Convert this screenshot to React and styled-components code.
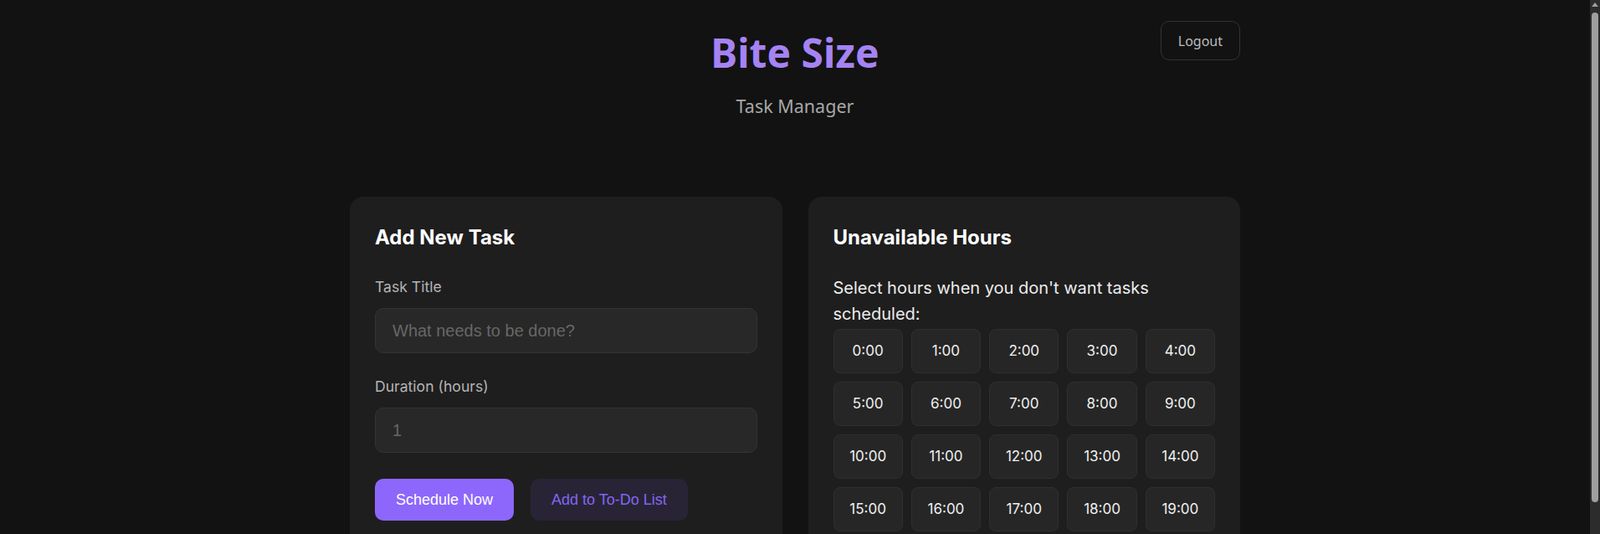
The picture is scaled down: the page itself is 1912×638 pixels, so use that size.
import React from "react"
import styled, { createGlobalStyle } from "styled-components"

const GlobalStyle = createGlobalStyle`
  html, body {
    margin: 0;
    background: #121212;
  }
  body {
    font-family: Inter, "Noto Sans", sans-serif;
    color: #e8e8e8;
    line-height: 1.6;
  }
  * {
    box-sizing: border-box;
  }
  ::-webkit-scrollbar {
    display: none;
  }
`

const Shell = styled.div`
  display: grid;
  grid-template-columns: minmax(0, 1fr) 12px;
  min-height: 100vh;
`

const Page = styled.div`
  width: 1064px;
  margin: 0 auto;
  padding: 25px 0 40px;
`

// stands in for the browser scrollbar on the right edge
const ScrollRail = styled.div`
  position: sticky;
  top: 0;
  height: 100vh;
  background: #2c2c2c;
  display: flex;
  flex-direction: column;
  align-items: center;
  padding-top: 3px;
`

const RailArrow = styled.div`
  width: 0;
  height: 0;
  border-left: 4px solid transparent;
  border-right: 4px solid transparent;
  border-bottom: 5px solid #9e9e9e;
`

const RailThumb = styled.div`
  width: 8px;
  height: 585px;
  margin-top: 7px;
  background: #9f9f9f;
  border-radius: 4px;
`

const Header = styled.header`
  display: grid;
  grid-template-columns: 1fr auto 1fr;
  align-items: start;
  font-family: "Noto Sans", "Liberation Sans", sans-serif;
`

const Brand = styled.div`
  grid-column: 2;
  text-align: center;
  padding-top: 9px;
`

const Title = styled.h1`
  margin: 0;
  font-size: 48px;
  line-height: 1.2;
  font-weight: 700;
  color: #a583f3;
`

const Subtitle = styled.p`
  margin: 18px 0 0;
  font-size: 21.5px;
  line-height: 33px;
  color: #a8a8a8;
`

const LogoutButton = styled.button`
  grid-column: 3;
  justify-self: end;
  height: 47px;
  padding: 0 20px;
  background: transparent;
  border: 1px solid #333;
  border-radius: 10px;
  color: #bdbdbd;
  font-family: "Noto Sans", "Liberation Sans", sans-serif;
  font-size: 16px;
  cursor: pointer;
`

const Columns = styled.main`
  display: grid;
  grid-template-columns: 1fr 1fr;
  gap: 31px;
  margin-top: 92px;
`

const Card = styled.section`
  background: #1e1e1e;
  border-radius: 16px;
  padding: 30px;
`

const CardTitle = styled.h2`
  margin: 0 0 26px;
  font-size: 24px;
  line-height: 38.4px;
  font-weight: 700;
  color: #fff;
`

const Field = styled.div`
  margin-bottom: 26px;
`

const Label = styled.label`
  display: block;
  margin-bottom: 11px;
  font-size: 17.6px;
  line-height: 1.6;
  color: #b5b5b5;
`

const Input = styled.input`
  display: block;
  width: 100%;
  height: 54px;
  padding: 0 20px;
  background: #282828;
  border: 1px solid #333;
  border-radius: 10px;
  color: #e8e8e8;
  font-family: "Liberation Sans", Arial, sans-serif;
  font-size: 20px;
  outline: none;

  &::placeholder {
    color: #676767;
  }
`

const ButtonRow = styled.div`
  display: flex;
  gap: 20px;
  margin-top: 31px;
`

const ActionButton = styled.button`
  height: 50px;
  padding: 0 25px;
  border: none;
  border-radius: 10px;
  font-family: "Liberation Sans", Arial, sans-serif;
  font-size: 18px;
  cursor: pointer;
  background: ${(p) => (p.$primary ? "#8d67fb" : "#282436")};
  color: ${(p) => (p.$primary ? "#fff" : "#8466f0")};
`

const Hint = styled.p`
  margin: 0 0 3px;
  font-size: 20px;
  line-height: 30.7px;
  color: #ececec;
`

const HourGrid = styled.div`
  display: grid;
  grid-template-columns: repeat(5, 1fr);
  gap: 10px;
`

const HourCell = styled.div`
  height: 53px;
  display: flex;
  align-items: center;
  justify-content: center;
  background: ${(p) => (p.$selected ? "#3a2f5c" : "#262626")};
  border: 1px solid #2f2f2f;
  border-radius: 8px;
  font-size: 17px;
  color: #f0f0f0;
  cursor: pointer;
`

const hours = Array.from({ length: 24 }, (_, i) => `${i}:00`)

export default function App() {
  return (
    <>
      <GlobalStyle />
      <Shell>
        <Page>
          <Header>
            <Brand>
              <Title>Bite Size</Title>
              <Subtitle>Task Manager</Subtitle>
            </Brand>
            <LogoutButton>Logout</LogoutButton>
          </Header>

          <Columns>
            <Card>
              <CardTitle>Add New Task</CardTitle>
              <Field>
                <Label>Task Title</Label>
                <Input type="text" placeholder="What needs to be done?" />
              </Field>
              <Field>
                <Label>Duration (hours)</Label>
                <Input type="number" placeholder="1" />
              </Field>
              <ButtonRow>
                <ActionButton $primary>Schedule Now</ActionButton>
                <ActionButton>Add to To-Do List</ActionButton>
              </ButtonRow>
            </Card>

            <Card>
              <CardTitle>Unavailable Hours</CardTitle>
              <Hint>Select hours when you don't want tasks scheduled:</Hint>
              <HourGrid>
                {hours.map((h) => (
                  <HourCell key={h}>{h}</HourCell>
                ))}
              </HourGrid>
            </Card>
          </Columns>
        </Page>
        <ScrollRail>
          <RailArrow />
          <RailThumb />
        </ScrollRail>
      </Shell>
    </>
  )
}
